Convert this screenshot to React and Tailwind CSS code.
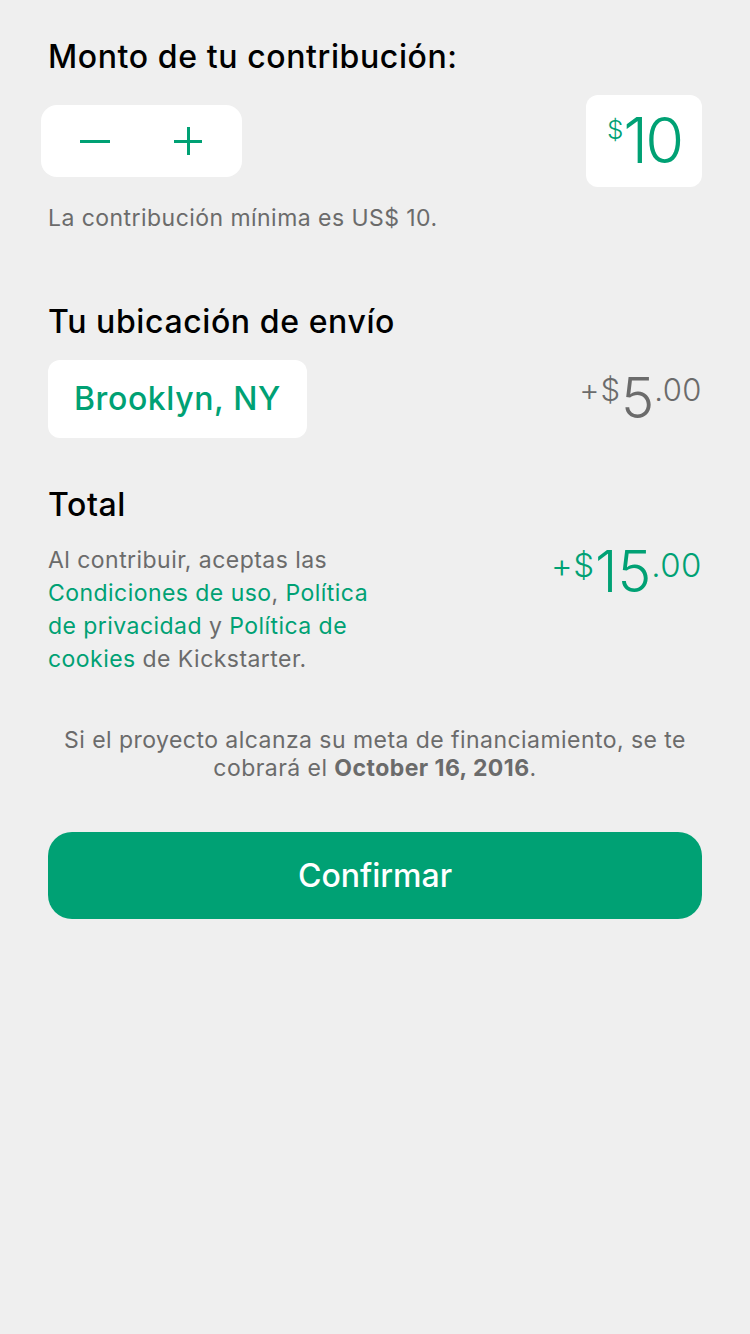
export default function App() {
  return (
    <div className="min-h-[1334px] bg-[#efefef] px-12 pt-[38px] text-black" style={{ fontFamily: 'Inter, "Noto Sans", sans-serif' }}>
      <h2 className="text-[32px] font-medium leading-[38px] tracking-[0.6px]">Monto de tu contribución:</h2>

      <div className="mt-[19px] flex items-start justify-between">
        <div className="-ml-[7px] mt-[10px] flex h-[72px] w-[201px] items-center gap-[64px] rounded-2xl bg-white pl-[39px]">
          <span className="block h-[3px] w-[30px] bg-[#00a174]" />
          <span className="relative block h-[28px] w-[28px]">
            <span className="absolute left-0 top-[12.5px] block h-[3px] w-[28px] bg-[#00a174]" />
            <span className="absolute left-[12.5px] top-0 block h-[28px] w-[3px] bg-[#00a174]" />
          </span>
        </div>
        <div className="flex h-[92px] w-[116px] items-start justify-center rounded-xl bg-white pt-[9px] text-[#00a174]">
          <span className="mt-[13px] text-[26px] font-light leading-none">$</span>
          <span className="text-[63px] font-light leading-[72px] tracking-[-3px]">10</span>
        </div>
      </div>

      <p className="mt-[16px] text-[23px] leading-[30px] tracking-[0.45px] text-[#6b6b6b]">La contribución mínima es US$ 10.</p>

      <h2 className="mt-[70px] text-[32px] font-medium leading-[38px] tracking-[0.6px]">Tu ubicación de envío</h2>

      <div className="mt-[19px] flex items-start justify-between">
        <div className="flex h-[78px] items-center rounded-xl bg-white px-[26px] text-[32px] font-medium tracking-[0.6px] text-[#00a174]">Brooklyn, NY</div>
        <div className="mt-[11px] flex items-start text-[#6b6b6b]">
          <span className="mt-[3px] text-[31px] font-light leading-none tracking-[1px]">+$</span>
          <span className="text-[56px] font-light leading-[54px]">5</span>
          <span className="mt-[3px] text-[31px] font-light leading-none tracking-[0.5px]">.00</span>
        </div>
      </div>

      <h2 className="mt-[48px] text-[32px] font-medium leading-[38px] tracking-[0.6px]">Total</h2>

      <div className="mt-[20px] flex items-start justify-between">
        <p className="text-[23px] leading-[33px] tracking-[0.45px] text-[#6b6b6b]">
          Al contribuir, aceptas las<br />
          <span className="text-[#00a174]">Condiciones de uso</span>, <span className="text-[#00a174]">Política</span><br />
          <span className="text-[#00a174]">de privacidad</span> y <span className="text-[#00a174]">Política de</span><br />
          <span className="text-[#00a174]">cookies</span> de Kickstarter.
        </p>
        <div className="flex items-start text-[#00a174]">
          <span className="mt-[5px] text-[33px] font-light leading-none tracking-[0.8px]">+$</span>
          <span className="text-[57px] font-light leading-[56px]">15</span>
          <span className="mt-[5px] text-[33px] font-light leading-none tracking-[0.5px]">.00</span>
        </div>
      </div>

      <p className="mt-[50px] text-center text-[23px] leading-[28px] tracking-[0.45px] text-[#6b6b6b]">
        Si el proyecto alcanza su meta de financiamiento, se te<br />cobrará el <b className="font-bold">October 16, 2016</b>.
      </p>

      <button className="mt-[50px] flex h-[87px] w-full items-center justify-center rounded-3xl bg-[#00a174] text-[32px] font-medium text-white">
        Confirmar
      </button>
    </div>
  )
}
